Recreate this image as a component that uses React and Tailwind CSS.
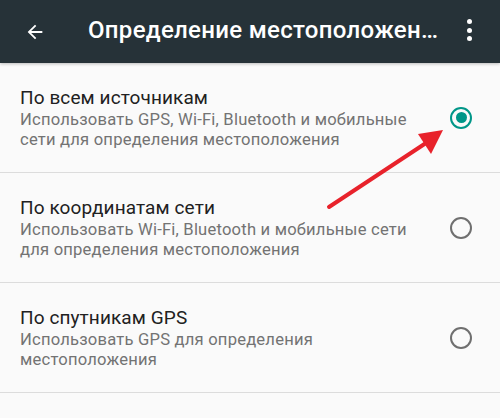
import React from "react";

const rows = [
  {
    title: "По всем источникам",
    sub: "Использовать GPS, Wi-Fi, Bluetooth и мобильные сети для определения местоположения",
    checked: true,
  },
  {
    title: "По координатам сети",
    sub: "Использовать Wi-Fi, Bluetooth и мобильные сети для определения местоположения",
    checked: false,
  },
  {
    title: "По спутникам GPS",
    sub: "Использовать GPS для определения местоположения",
    checked: false,
  },
];

function Radio({ checked }) {
  return checked ? (
    <div className="w-[22px] h-[22px] rounded-full border-[2.5px] border-[#009688] flex items-center justify-center">
      <div className="w-[11px] h-[11px] rounded-full bg-[#009688]" />
    </div>
  ) : (
    <div className="w-[22px] h-[22px] rounded-full border-[2px] border-[#6f6f6f]" />
  );
}

export default function App() {
  return (
    <div
      className="relative w-[500px] h-[418px] overflow-hidden bg-[#fafafa]"
      style={{ fontFamily: "Roboto, 'Noto Sans', sans-serif" }}
    >
      <header className="h-[63px] bg-[#263238] flex items-center shadow-[0_1px_3px_rgba(0,0,0,0.25)] relative z-10">
        <div className="w-[70px] pl-[24px] flex items-center">
          <svg width="22" height="22" viewBox="0 0 24 24" fill="white">
            <path d="M20 11H7.83l5.59-5.59L12 4l-8 8 8 8 1.41-1.41L7.83 13H20v-2z" />
          </svg>
        </div>
        <div className="ml-[18px] flex-1 text-white text-[24px] font-medium tracking-[0.3px] leading-none pb-[3px]">
          Определение местоположен…
        </div>
        <div className="w-[56px] flex flex-col items-center gap-[3.5px] pr-[6px] pb-[3px]">
          <span className="w-[5px] h-[5px] rounded-full bg-white" />
          <span className="w-[5px] h-[5px] rounded-full bg-white" />
          <span className="w-[5px] h-[5px] rounded-full bg-white" />
        </div>
      </header>
      <div className="flex flex-col">
        {rows.map((r, i) => (
          <div
            key={i}
            className="flex items-center h-[110px] pl-[20px] pr-[28px] border-b border-[#dcdcdc]"
          >
            <div className="flex-1 pr-[24px]">
              <div className="text-[19px] leading-[24px] tracking-[0.1px] text-[#212121]">{r.title}</div>
              <div className="text-[16.6px] leading-[20px] tracking-[0.2px] text-[#737373]">{r.sub}</div>
            </div>
            <Radio checked={r.checked} />
          </div>
        ))}
      </div>
      <svg className="absolute left-0 top-0 pointer-events-none" width="500" height="418">
        <line x1="329" y1="207" x2="426" y2="143" stroke="#e8222b" strokeWidth="4" strokeLinecap="round" />
        <polygon points="443,130 418,134 431,154" fill="#e8222b" />
      </svg>
    </div>
  );
}
